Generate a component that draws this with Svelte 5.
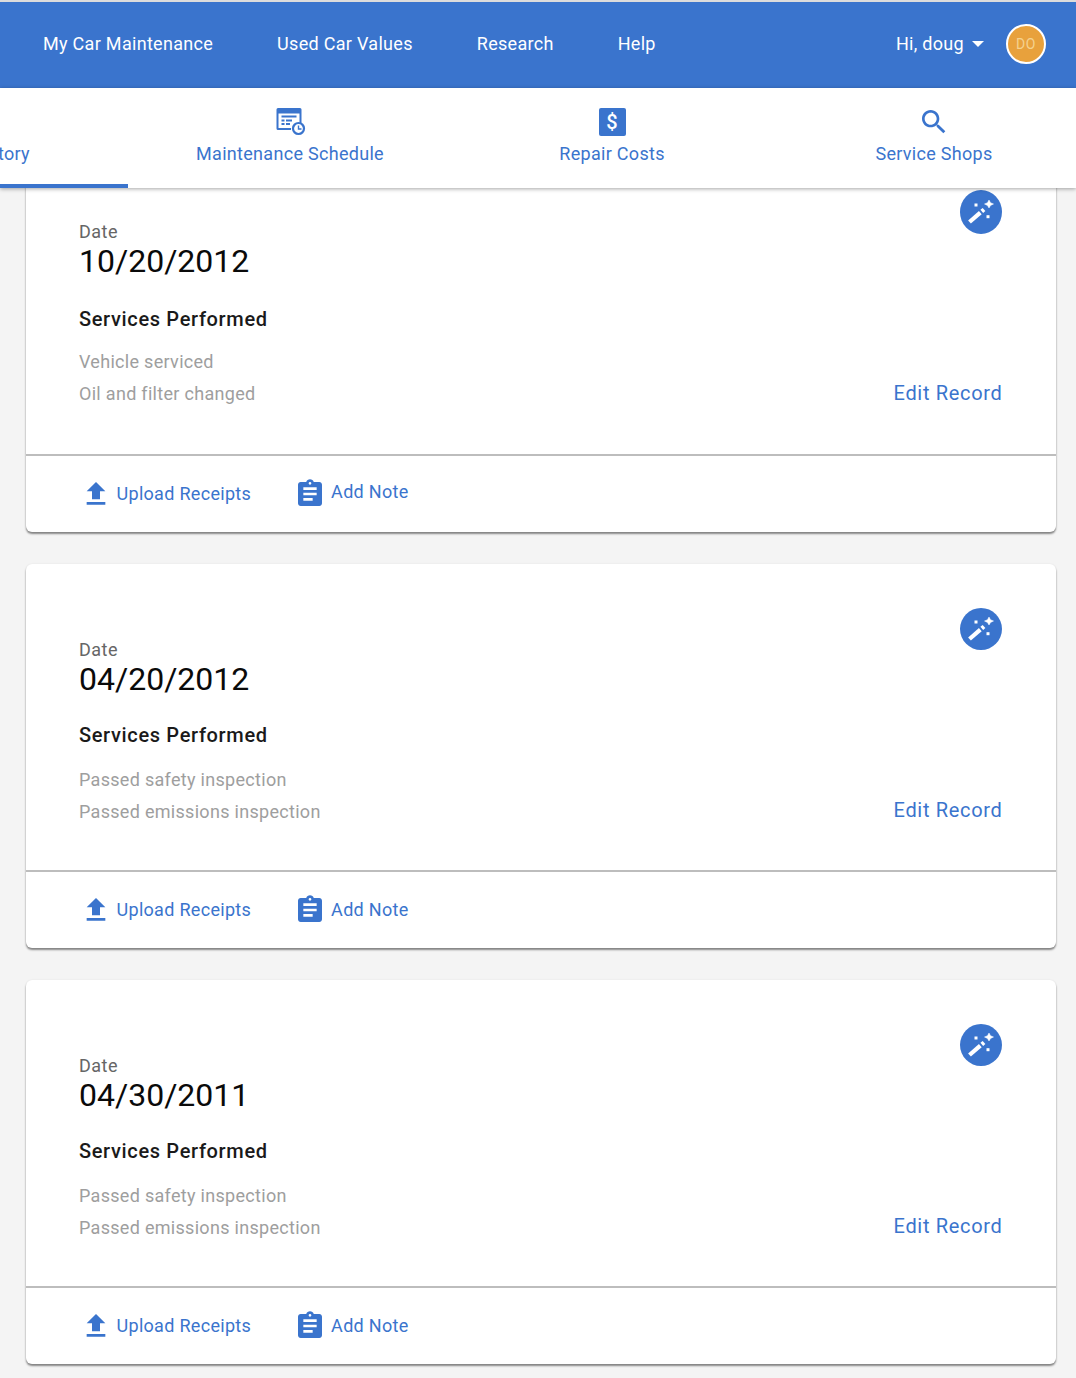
<script>
	const navLinks = ['My Car Maintenance', 'Used Car Values', 'Research', 'Help'];

	const records = [
		{ date: '10/20/2012', services: ['Vehicle serviced', 'Oil and filter changed'] },
		{ date: '04/20/2012', services: ['Passed safety inspection', 'Passed emissions inspection'] },
		{ date: '04/30/2011', services: ['Passed safety inspection', 'Passed emissions inspection'] }
	];
</script>

<div class="page">
	<header class="topbar">
		<nav class="nav">
			{#each navLinks as link}
				<span class="nav-link">{link}</span>
			{/each}
		</nav>
		<div class="user">
			<span class="nav-link">Hi, doug</span>
			<span class="caret"></span>
			<span class="avatar">DO</span>
		</div>
	</header>

	<div class="tabs">
		<div class="tab active">
			<span class="tab-icon"></span>
			<span>Service History</span>
		</div>
		<div class="tab">
			<span class="tab-icon">
				<svg width="32" height="32" viewBox="0 0 32 32">
					<path d="M4 2h22a1.500 1.500 0 0 1 1.500 1.500V17h-2V7.500h-21V22H17v2H4a1.500 1.500 0 0 1-1.500-1.500v-19A1.500 1.500 0 0 1 4 2z" fill="#3a74cd" />
					<path d="M7.500 9.500h15v2h-15zM7.500 13.500h3v2h-3zM12 13.500h6v2h-6zM7.500 17h3v2h-3zM12 17h4v2h-4z" fill="#3a74cd" />
					<circle cx="24.500" cy="22.500" r="5.500" fill="#fff" stroke="#3a74cd" stroke-width="2.200" />
					<path d="M24.500 19.500v3.500h3" fill="none" stroke="#3a74cd" stroke-width="1.400" />
				</svg>
			</span>
			<span>Maintenance Schedule</span>
		</div>
		<div class="tab">
			<span class="tab-icon">
				<span class="dollar">$</span>
			</span>
			<span>Repair Costs</span>
		</div>
		<div class="tab">
			<span class="tab-icon">
				<svg width="32" height="32" viewBox="0 0 24 24" fill="#3a74cd">
					<path d="M15.500 14h-.79l-.28-.27C15.410 12.590 16 11.110 16 9.500 16 5.910 13.090 3 9.500 3S3 5.910 3 9.500 5.910 16 9.500 16c1.610 0 3.090-.59 4.230-1.570l.27.28v.79l5 4.990L20.490 19l-4.990-5zm-6 0C7.010 14 5 11.990 5 9.500S7.010 5 9.500 5 14 7.010 14 9.500 11.990 14 9.500 14z" />
				</svg>
			</span>
			<span>Service Shops</span>
		</div>
	</div>

	<main class="content">
		{#each records as record, i}
			<section class="card" class:first={i === 0}>
				<div class="card-body">
					<div class="details">
						<div class="label">Date</div>
						<div class="date">{record.date}</div>
						<h3 class="heading">Services Performed</h3>
						<ul class="services">
							{#each record.services as service}
								<li>{service}</li>
							{/each}
						</ul>
					</div>
					<div class="actions">
						<span class="fab">
							<svg width="30" height="30" viewBox="0 0 30 30" fill="#fff" stroke="#fff">
								<path d="M3.500 25L14.300 15.700" stroke-width="4.200" fill="none" />
								<path d="M15.800 14.400L18 12.500" stroke-width="4.200" fill="none" />
								<path d="M23 3l1.500 2.700L27.500 7l-3 1.500L23 11l-1.500-2.500-3-1.500 3-1.300z" stroke-width="0.500" />
								<rect x="8.500" y="6.500" width="3" height="3" stroke="none" />
								<rect x="20.500" y="18.200" width="3" height="3" stroke="none" />
							</svg>
						</span>
						<span class="edit">Edit Record</span>
					</div>
				</div>
				<div class="card-footer">
					<span class="footer-action upload">
						<svg width="32" height="32" viewBox="0 0 24 24" fill="#3a74cd">
							<path d="M9 16h6v-6h4l-7-7-7 7h4zm-4 2h14v2H5z" />
						</svg>
						<span class="action-text">Upload Receipts</span>
					</span>
					<span class="footer-action note">
						<svg width="32" height="32" viewBox="0 0 24 24" fill="#3a74cd">
							<path d="M19 3h-4.180C14.400 1.840 13.300 1 12 1c-1.300 0-2.400.84-2.820 2H5c-1.100 0-2 .9-2 2v14c0 1.100.9 2 2 2h14c1.100 0 2-.9 2-2V5c0-1.100-.9-2-2-2zm-7 0c.55 0 1 .45 1 1s-.45 1-1 1-1-.45-1-1 .45-1 1-1zm5 4v2H7V7h10zm0 4v2H7v-2h10zm-3 4v2H7v-2h7z" />
						</svg>
						<span class="action-text note-text">Add Note</span>
					</span>
				</div>
			</section>
		{/each}
	</main>
</div>

<style>
	:global(body) {
		margin: 0;
		background: #f4f4f4;
	}

	.page {
		height: 1378px;
		overflow: hidden;
		display: flex;
		flex-direction: column;
		font-family: Roboto, 'Liberation Sans', sans-serif;
		letter-spacing: 0.3px;
		background: #f4f4f4;
	}

	.topbar {
		flex: none;
		box-sizing: border-box;
		height: 88px;
		border-top: 2px solid #dcdcdc;
		background: #3a74cd;
		display: flex;
		align-items: center;
		justify-content: space-between;
		padding: 0 30px 2px 43px;
		color: #fff;
	}

	.nav {
		display: flex;
		gap: 64px;
	}

	.nav-link {
		font-size: 18px;
		line-height: 24px;
	}

	.user {
		display: flex;
		align-items: center;
	}

	.caret {
		width: 0;
		height: 0;
		margin: 0 22px 0 8px;
		border-left: 6.500px solid transparent;
		border-right: 6.500px solid transparent;
		border-top: 6px solid #fff;
	}

	.avatar {
		box-sizing: border-box;
		width: 40px;
		height: 40px;
		border: 2px solid #fff;
		border-radius: 50%;
		background: #e8a13c;
		color: #f5d28f;
		font-size: 14px;
		letter-spacing: 0.5px;
		display: flex;
		align-items: center;
		justify-content: center;
	}

	.tabs {
		flex: none;
		position: relative;
		z-index: 2;
		height: 100px;
		display: flex;
		overflow: hidden;
		background: #fff;
		box-shadow: 0 1px 4px rgba(0, 0, 0, 0.35);
		color: #3a74cd;
		font-size: 18px;
	}

	.tab {
		flex: none;
		box-sizing: border-box;
		width: 322px;
		height: 100px;
		display: flex;
		flex-direction: column;
		align-items: center;
		padding-top: 18px;
		line-height: 24px;
		gap: 1px;
	}

	.tab.active {
		width: 321px;
		margin-left: -193px;
		margin-right: 1px;
		border-bottom: 4px solid #3a74cd;
	}

	.tab-icon {
		width: 32px;
		height: 32px;
		margin-bottom: 3px;
		display: flex;
		align-items: center;
		justify-content: center;
	}

	.dollar {
		width: 27px;
		height: 28px;
		border-radius: 2px;
		background: #3a74cd;
		color: #fff;
		font-size: 20px;
		font-weight: 500;
		line-height: 28px;
		text-align: center;
	}

	.content {
		flex: 1;
		padding: 0 20px 0 26px;
		display: flex;
		flex-direction: column;
		gap: 32px;
	}

	.card {
		flex: none;
		background: #fff;
		border-radius: 6px;
		box-shadow: 0 2px 2px rgba(0, 0, 0, 0.45), 0 0 2px rgba(0, 0, 0, 0.08);
	}

	.card.first {
		margin-top: -40px;
	}

	.card-body {
		box-sizing: border-box;
		height: 308px;
		display: flex;
		justify-content: space-between;
		padding: 74px 54px 0 53px;
		border-bottom: 2px solid #bdbdbd;
	}

	.first .card-body {
		padding-top: 72px;
	}

	.label {
		font-size: 18px;
		line-height: 23px;
		letter-spacing: 0.5px;
		color: #666;
	}

	.date {
		font-size: 32px;
		line-height: 36px;
		letter-spacing: 0;
		color: #0a0a0a;
	}

	.heading {
		margin: 24px 0 15px;
		font-size: 20px;
		line-height: 28px;
		font-weight: 500;
		letter-spacing: 0.65px;
		color: #1a1a1a;
	}

	.first .heading {
		margin: 26px 0 13px;
	}

	.services {
		list-style: none;
		margin: 0;
		padding: 0;
		font-size: 18px;
		line-height: 32px;
		color: #9e9e9e;
	}

	.actions {
		margin-top: -30px;
		display: flex;
		flex-direction: column;
		align-items: flex-end;
		justify-content: space-between;
		padding-bottom: 46px;
	}

	.first .actions {
		padding-bottom: 47px;
	}

	.fab {
		width: 42px;
		height: 42px;
		border-radius: 50%;
		background: #3a74cd;
		display: flex;
		align-items: center;
		justify-content: center;
	}

	.first .fab {
		height: 44px;
	}

	.edit {
		font-size: 20px;
		line-height: 28px;
		letter-spacing: 0.68px;
		margin-right: -0.500px;
		color: #3a74cd;
	}

	.card-footer {
		height: 76px;
		display: flex;
		align-items: center;
		padding-left: 54px;
		color: #3a74cd;
		font-size: 18px;
	}

	.footer-action {
		display: flex;
		align-items: center;
	}

	.action-text {
		margin-top: -2px;
	}

	.upload {
		gap: 4.500px;
		margin-right: 43px;
	}

	.note {
		gap: 5px;
	}

	.first .note-text {
		margin-top: -6px;
	}
</style>
